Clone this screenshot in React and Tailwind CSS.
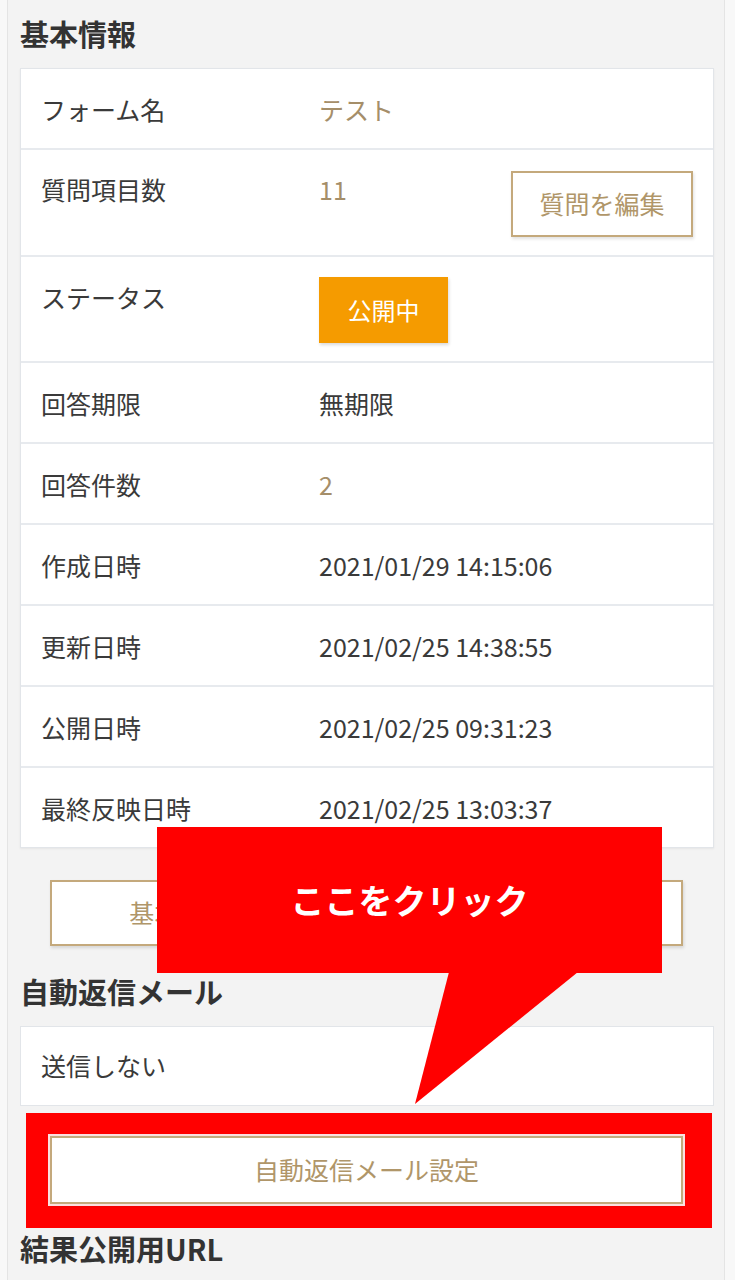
const ROWS = [
  { label: '回答期限', value: '無期限' },
  { label: '回答件数', value: '2', gold: true },
  { label: '作成日時', value: '2021/01/29 14:15:06' },
  { label: '更新日時', value: '2021/02/25 14:38:55' },
  { label: '公開日時', value: '2021/02/25 09:31:23' },
  { label: '最終反映日時', value: '2021/02/25 13:03:37' },
]

const font = { fontFamily: '"Noto Sans CJK JP", "Noto Sans", sans-serif' }

function Row({ label, children, className = '' }) {
  return (
    <div className={`flex items-start border-t-2 border-[#e7eaee] px-[20px] first:border-t-0 ${className}`}>
      <div className="w-[278px] shrink-0 text-[25px] leading-[30px] text-[#3a3a3a]">{label}</div>
      <div className="flex-1">{children}</div>
    </div>
  )
}

function GoldButton({ children, className = '' }) {
  return (
    <button
      type="button"
      className={`border-2 border-[#c4a97c] bg-white text-[25px] text-[#b09669] shadow-[1px_2px_3px_rgba(0,0,0,0.12)] ${className}`}
    >
      {children}
    </button>
  )
}

export default function App() {
  return (
    <div className="relative h-[1280px] overflow-hidden bg-[#f8f8f8]" style={font}>
      <div className="ml-[7px] h-full w-[718px] border-x border-[#e4e4e4] bg-[#f3f3f3] pl-[12px] pr-[10px] pt-[14px]">
        <h2 className="text-[29px] font-bold leading-[38px] text-[#333]">基本情報</h2>

        <div className="mt-[16px] border border-[#e2e5e9] bg-white shadow-[0_1px_2px_rgba(0,0,0,0.06)]">
          <Row label="フォーム名" className="h-[79px] py-[25px]">
            <span className="text-[25px] leading-[30px] text-[#a58e69]">テスト</span>
          </Row>
          <Row label="質問項目数" className="h-[107px] pt-[24px]">
            <div className="flex items-start justify-between">
              <span className="text-[25px] leading-[30px] text-[#a58e69]">11</span>
              <GoldButton className="-mt-[3px] h-[66px] w-[182px]">質問を編集</GoldButton>
            </div>
          </Row>
          <Row label="ステータス" className="h-[106px] pt-[25px]">
            <div className="-mt-[5px] flex h-[66px] w-[129px] items-center justify-center bg-[#f59b00] text-[24px] text-white shadow-[1px_2px_3px_rgba(0,0,0,0.15)]">
              公開中
            </div>
          </Row>
          {ROWS.map((r) => (
            <Row key={r.label} label={r.label} className="h-[81px] py-[25px]">
              <span className={`text-[25px] leading-[30px] ${r.gold ? 'text-[#a58e69]' : 'text-[#3a3a3a]'}`}>
                {r.value}
              </span>
            </Row>
          ))}
        </div>

        <div className="mt-[32px] pl-[30px] pr-[31px]">
          <GoldButton className="h-[66px] w-full">基本情報・フォーム名・ステータスを編集</GoldButton>
        </div>

        <h2 className="mt-[26px] text-[29px] font-bold leading-[38px] text-[#333]">自動返信メール</h2>

        <div className="mt-[16px] flex h-[80px] items-center border border-[#e2e5e9] bg-white px-[20px] text-[25px] text-[#3a3a3a]">
          送信しない
        </div>

        <div className="ml-[6px] mr-[2px] mt-[7px] bg-[#ff0000] pb-[24px] pl-[24px] pr-[29px] pt-[23px]">
          <GoldButton className="h-[68px] w-full outline outline-2 outline-[#fbe0e0]">自動返信メール設定</GoldButton>
        </div>

        <h2 className="mt-[1px] text-[29px] font-bold leading-[38px] text-[#333]">結果公開用URL</h2>
      </div>

      <div className="absolute left-[157px] top-[827px] flex h-[146px] w-[505px] items-start justify-center bg-[#ff0000] pt-[50px]">
        <span className="text-[34px] font-bold leading-[46px] text-white">ここをクリック</span>
      </div>
      <svg className="pointer-events-none absolute left-0 top-0" width="735" height="1280">
        <polygon points="449,972 578,972 415,1104" fill="#ff0000" />
      </svg>
    </div>
  )
}
